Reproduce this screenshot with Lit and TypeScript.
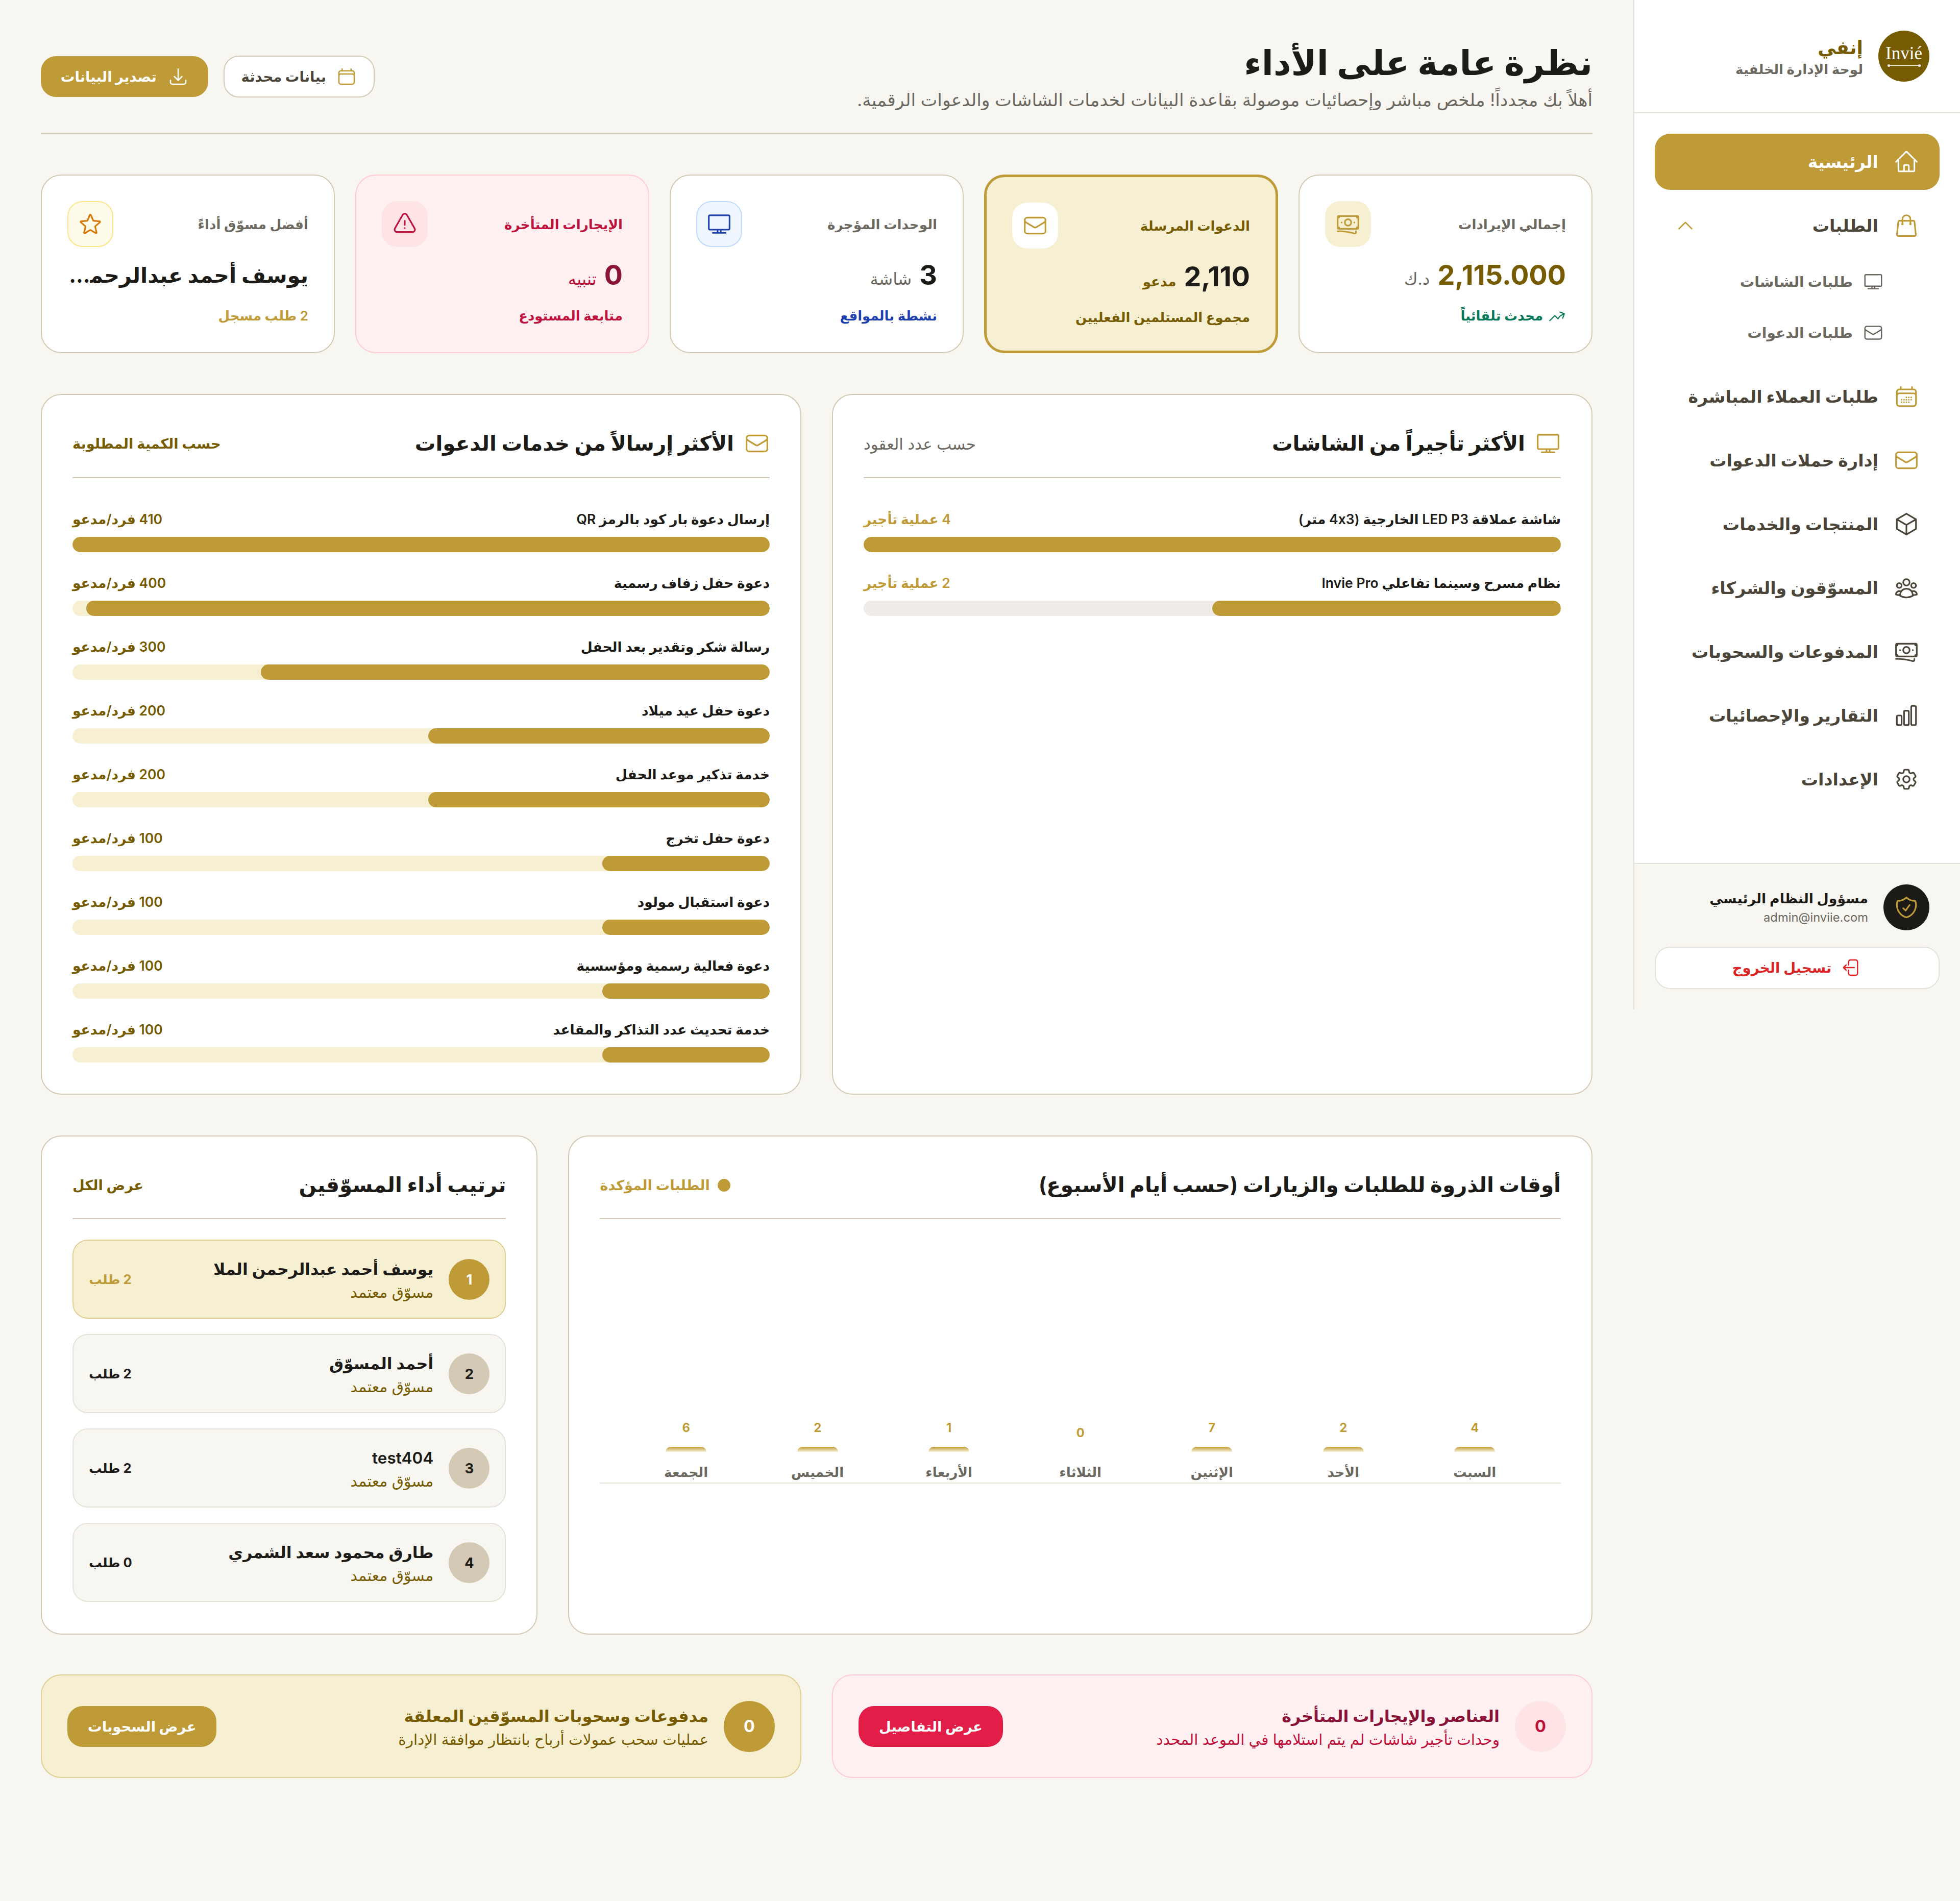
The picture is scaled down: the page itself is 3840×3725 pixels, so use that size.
import { LitElement, html, css, svg } from "lit";
import { customElement } from "lit/decorators.js";

const I: Record<string, string> = {
  home: "m2.25 12 8.954-8.955c.44-.439 1.152-.439 1.591 0L21.75 12M4.5 9.75v10.125c0 .621.504 1.125 1.125 1.125H9.75v-4.875c0-.621.504-1.125 1.125-1.125h2.25c.621 0 1.125.504 1.125 1.125V21h4.125c.621 0 1.125-.504 1.125-1.125V9.75M8.25 21h8.25",
  bag: "M15.75 10.5V6a3.75 3.75 0 1 0-7.5 0v4.5m11.356-1.993 1.263 12c.07.665-.45 1.243-1.119 1.243H4.25a1.125 1.125 0 0 1-1.12-1.243l1.264-12A1.125 1.125 0 0 1 5.513 7.5h12.974c.576 0 1.059.435 1.119 1.007ZM8.625 10.5a.375.375 0 1 1-.75 0 .375.375 0 0 1 .75 0Zm7.5 0a.375.375 0 1 1-.75 0 .375.375 0 0 1 .75 0Z",
  desktop: "M6 20.25h12m-7.5-3v3m3-3v3m-10.125-3h17.25c.621 0 1.125-.504 1.125-1.125V4.875c0-.621-.504-1.125-1.125-1.125H3.375c-.621 0-1.125.504-1.125 1.125v11.25c0 .621.504 1.125 1.125 1.125Z",
  mail: "M21.75 6.75v10.5a2.25 2.25 0 0 1-2.25 2.25h-15a2.25 2.25 0 0 1-2.25-2.25V6.75m19.5 0A2.25 2.25 0 0 0 19.5 4.5h-15a2.25 2.25 0 0 0-2.25 2.25m19.5 0v.243a2.25 2.25 0 0 1-1.07 1.916l-7.5 4.615a2.25 2.25 0 0 1-2.36 0L3.32 8.91a2.25 2.25 0 0 1-1.07-1.916V6.75",
  calDays: "M6.75 3v2.25M17.25 3v2.25M3 18.75V7.5a2.25 2.25 0 0 1 2.25-2.25h13.5A2.25 2.25 0 0 1 21 7.5v11.25m-18 0A2.25 2.25 0 0 0 5.25 21h13.5A2.25 2.25 0 0 0 21 18.75m-18 0v-7.5A2.25 2.25 0 0 1 5.25 9h13.5A2.25 2.25 0 0 1 21 11.25v7.5m-9-6h.008v.008H12v-.008ZM12 15h.008v.008H12V15Zm0 2.25h.008v.008H12v-.008ZM9.75 15h.008v.008H9.75V15Zm0 2.25h.008v.008H9.75v-.008ZM7.5 15h.008v.008H7.5V15Zm0 2.25h.008v.008H7.5v-.008Zm6.75-4.5h.008v.008h-.008v-.008Zm0 2.25h.008v.008h-.008V15Zm0 2.25h.008v.008h-.008v-.008Zm2.25-4.5h.008v.008H16.5v-.008Zm0 2.25h.008v.008H16.5V15Z",
  cal: "M6.75 3v2.25M17.25 3v2.25M3 18.75V7.5a2.25 2.25 0 0 1 2.25-2.25h13.5A2.25 2.25 0 0 1 21 7.5v11.25m-18 0A2.25 2.25 0 0 0 5.25 21h13.5A2.25 2.25 0 0 0 21 18.75m-18 0v-7.5A2.25 2.25 0 0 1 5.25 9h13.5A2.25 2.25 0 0 1 21 11.25v7.5",
  cube: "m21 7.5-9-5.25L3 7.5m18 0-9 5.25m9-5.25v9l-9 5.25M3 7.5l9 5.25M3 7.5v9l9 5.25m0-9v9",
  users: "M18 18.72a9.094 9.094 0 0 0 3.741-.479 3 3 0 0 0-4.682-2.72m.94 3.198.001.031c0 .225-.012.447-.037.666A11.944 11.944 0 0 1 12 21c-2.17 0-4.207-.576-5.963-1.584A6.062 6.062 0 0 1 6 18.719m12 0a5.971 5.971 0 0 0-.941-3.197m0 0A5.995 5.995 0 0 0 12 12.75a5.995 5.995 0 0 0-5.058 2.772m0 0a3 3 0 0 0-4.681 2.72 8.986 8.986 0 0 0 3.74.477m.94-3.197a5.971 5.971 0 0 0-.94 3.197M15 6.75a3 3 0 1 1-6 0 3 3 0 0 1 6 0Zm6 3a2.25 2.25 0 1 1-4.5 0 2.25 2.25 0 0 1 4.5 0Zm-13.5 0a2.25 2.25 0 1 1-4.5 0 2.25 2.25 0 0 1 4.5 0Z",
  cash: "M2.25 18.75a60.07 60.07 0 0 1 15.797 2.101c.727.198 1.453-.342 1.453-1.096V18.75M3.75 4.5v.75A.75.75 0 0 1 3 6h-.75m0 0v-.375c0-.621.504-1.125 1.125-1.125H20.25M2.25 6v9m18-10.5v.75c0 .414.336.75.75.75h.75m-1.5-1.5h.375c.621 0 1.125.504 1.125 1.125v9.75c0 .621-.504 1.125-1.125 1.125h-.375m1.5-1.5H21a.75.75 0 0 0-.75.75v.75m0 0H3.75m0 0h-.375a1.125 1.125 0 0 1-1.125-1.125V15m1.5 1.5v-.75A.75.75 0 0 0 3 15h-.75M15 10.5a3 3 0 1 1-6 0 3 3 0 0 1 6 0Zm3 0h.008v.008H18V10.5Zm-12 0h.008v.008H6V10.5Z",
  chart: "M3 13.125C3 12.504 3.504 12 4.125 12h2.25c.621 0 1.125.504 1.125 1.125v6.75C7.5 20.496 6.996 21 6.375 21h-2.25A1.125 1.125 0 0 1 3 19.875v-6.75ZM9.75 8.625c0-.621.504-1.125 1.125-1.125h2.25c.621 0 1.125.504 1.125 1.125v11.25c0 .621-.504 1.125-1.125 1.125h-2.25a1.125 1.125 0 0 1-1.125-1.125V8.625ZM16.5 4.125c0-.621.504-1.125 1.125-1.125h2.25C20.496 3 21 3.504 21 4.125v15.75c0 .621-.504 1.125-1.125 1.125h-2.25a1.125 1.125 0 0 1-1.125-1.125V4.125Z",
  cog: "M9.594 3.94c.09-.542.56-.94 1.11-.94h2.593c.55 0 1.02.398 1.11.94l.213 1.281c.063.374.313.686.645.87.074.04.147.083.22.127.325.196.72.257 1.075.124l1.217-.456a1.125 1.125 0 0 1 1.37.49l1.296 2.247a1.125 1.125 0 0 1-.26 1.431l-1.003.827c-.293.241-.438.613-.43.992a7.723 7.723 0 0 1 0 .255c-.008.378.137.75.43.991l1.004.827c.424.35.534.955.26 1.43l-1.298 2.247a1.125 1.125 0 0 1-1.369.491l-1.217-.456c-.355-.133-.75-.072-1.076.124a6.47 6.47 0 0 1-.22.128c-.331.183-.581.495-.644.869l-.213 1.281c-.09.543-.56.94-1.11.94h-2.594c-.55 0-1.019-.398-1.11-.94l-.213-1.281c-.062-.374-.312-.686-.644-.87a6.52 6.52 0 0 1-.22-.127c-.325-.196-.72-.257-1.076-.124l-1.217.456a1.125 1.125 0 0 1-1.369-.49l-1.297-2.247a1.125 1.125 0 0 1 .26-1.431l1.004-.827c.292-.24.437-.613.43-.991a6.932 6.932 0 0 1 0-.255c.007-.38-.138-.751-.43-.992l-1.004-.827a1.125 1.125 0 0 1-.26-1.43l1.297-2.247a1.125 1.125 0 0 1 1.37-.491l1.216.456c.356.133.751.072 1.076-.124.072-.044.146-.086.22-.128.332-.183.582-.495.644-.869l.214-1.28ZM15 12a3 3 0 1 1-6 0 3 3 0 0 1 6 0Z",
  shield: "M9 12.75 11.25 15 15 9.75m-3-7.036A11.959 11.959 0 0 1 3.598 6 11.99 11.99 0 0 0 3 9.749c0 5.592 3.824 10.29 9 11.623 5.176-1.332 9-6.03 9-11.622 0-1.31-.21-2.571-.598-3.751h-.152c-3.196 0-6.1-1.248-8.25-3.285Z",
  logout: "M15.75 9V5.25A2.25 2.25 0 0 0 13.5 3h-6a2.25 2.25 0 0 0-2.25 2.25v13.5A2.25 2.25 0 0 0 7.5 21h6a2.25 2.25 0 0 0 2.25-2.25V15m3 0 3-3m0 0-3-3m3 3H9",
  tray: "M3 16.5v2.25A2.25 2.25 0 0 0 5.25 21h13.5A2.25 2.25 0 0 0 21 18.75V16.5M16.5 12 12 16.5m0 0L7.5 12m4.5 4.5V3",
  warn: "M12 9v3.75m-9.303 3.376c-.866 1.5.217 3.374 1.948 3.374h14.71c1.73 0 2.813-1.874 1.948-3.374L13.949 3.378c-.866-1.5-3.032-1.5-3.898 0L2.697 16.126ZM12 15.75h.007v.008H12v-.008Z",
  star: "M11.48 3.499a.562.562 0 0 1 1.04 0l2.125 5.111a.563.563 0 0 0 .475.345l5.518.442c.499.04.701.663.321.988l-4.204 3.602a.563.563 0 0 0-.182.557l1.285 5.385a.562.562 0 0 1-.84.61l-4.725-2.885a.562.562 0 0 0-.586 0L6.982 20.54a.562.562 0 0 1-.84-.61l1.285-5.386a.562.562 0 0 0-.182-.557l-4.204-3.602a.562.562 0 0 1 .321-.988l5.518-.442a.563.563 0 0 0 .475-.345L11.48 3.5Z",
  trend: "M2.25 18 9 11.25l4.306 4.306a11.95 11.95 0 0 1 5.814-5.518l2.74-1.22m0 0-5.94-2.281m5.94 2.28-2.28 5.941",
  up: "m4.5 15.75 7.5-7.5 7.5 7.5",
};

const icon = (n: string, size: number, cls = "") => html`<svg class=${"ic " + cls} style="width:${size}px;height:${size}px" viewBox="0 0 24 24" fill="none" stroke="currentColor" stroke-width="1.5" stroke-linecap="round" stroke-linejoin="round">${svg`<path d=${I[n]}></path>`}</svg>`;

const invites: [string, number][] = [
  ["إرسال دعوة بار كود بالرمز QR", 410],
  ["دعوة حفل زفاف رسمية", 400],
  ["رسالة شكر وتقدير بعد الحفل", 300],
  ["دعوة حفل عيد ميلاد", 200],
  ["خدمة تذكير موعد الحفل", 200],
  ["دعوة حفل تخرج", 100],
  ["دعوة استقبال مولود", 100],
  ["دعوة فعالية رسمية ومؤسسية", 100],
  ["خدمة تحديث عدد التذاكر والمقاعد", 100],
];
const screens: [string, number][] = [
  ["شاشة عملاقة LED P3 الخارجية (4x3 متر)", 4],
  ["نظام مسرح وسينما تفاعلي Invie Pro", 2],
];
const sellers: [string, number][] = [
  ["يوسف أحمد عبدالرحمن الملا", 2],
  ["أحمد المسوّق", 2],
  ["test404", 2],
  ["طارق محمود سعد الشمري", 0],
];
const days: [string, number][] = [
  ["السبت", 4], ["الأحد", 2], ["الإثنين", 7], ["الثلاثاء", 0], ["الأربعاء", 1], ["الخميس", 2], ["الجمعة", 6],
];
const nav: [string, string][] = [
  ["calDays", "طلبات العملاء المباشرة"],
  ["mail", "إدارة حملات الدعوات"],
  ["cube", "المنتجات والخدمات"],
  ["users", "المسوّقون والشركاء"],
  ["cash", "المدفوعات والسحوبات"],
  ["chart", "التقارير والإحصائيات"],
  ["cog", "الإعدادات"],
];

@customElement("app-root")
export class AppRoot extends LitElement {
  static styles = css`
    :host { display: block; zoom: 2.5; font-family: Inter, "DejaVu Sans", sans-serif; background: #f8f6f1; color: #1c1b17; min-height: 1490px; }
    * { box-sizing: border-box; }
    .ic { flex: none; display: block; }
    .flip { transform: scaleX(-1); }
    .page { display: flex; direction: rtl; align-items: flex-start; }

    .side { width: 256px; height: 791px; flex: none; background: #fff; border-left: 1px solid #e5e2d8; display: flex; flex-direction: column; }
    .brand { display: flex; align-items: center; gap: 12px; padding: 24px; border-bottom: 1px solid #e5e2d8; }
    .logo { width: 40px; height: 40px; border-radius: 50%; background: #765b00; color: #fff; display: flex; flex-direction: column; align-items: center; justify-content: center; direction: ltr; font-family: "Liberation Serif", serif; font-size: 14px; line-height: 13px; }
    .logo i { display: flex; justify-content: space-between; align-items: center; width: 26px; height: 2px; margin-top: 2px; background: linear-gradient(#fff, #fff) center / 100% 0.5px no-repeat; }
    .logo i::before, .logo i::after { content: ""; width: 2px; height: 2px; border-radius: 50%; background: #fff; }
    .brand b { display: block; font-size: 14.5px; line-height: 20px; color: #765b00; }
    .brand span { display: block; font-size: 10.5px; line-height: 14px; color: #6b6860; font-weight: 600; }
    .nav { flex: 1; padding: 16px 16px 0; display: flex; flex-direction: column; gap: 6px; }
    .item { height: 44px; display: flex; align-items: center; gap: 12px; padding: 0 16px; border-radius: 12px; font-size: 13.3px; font-weight: 700; color: #4a4538; }
    .item .gold { color: #bf9b37; }
    .item.on { background: #bf9b37; color: #fff; }
    .item.on .gold { color: #fff; }
    .item .chev { margin-inline-start: auto; color: #bf9b37; }
    .subs { display: flex; flex-direction: column; margin: -4px 0 2px; }
    .sub { height: 40px; display: flex; align-items: center; gap: 8px; padding-right: 44px; font-size: 11.25px; font-weight: 600; color: #6b6860; }
    .foot { background: #f8f6f1; border-top: 1px solid #e5e2d8; padding: 16px; }
    .who { display: flex; align-items: center; gap: 12px; padding: 0 8px; margin-bottom: 13px; }
    .ava { width: 36px; height: 36px; border-radius: 50%; background: #1c1b17; color: #bf9b37; display: flex; align-items: center; justify-content: center; flex: none; }
    .who b { display: block; font-size: 10.7px; line-height: 16px; font-weight: 600; }
    .who span { display: block; font-size: 9.5px; line-height: 14px; color: #6b6860; direction: ltr; text-align: right; }
    .out { height: 33px; display: flex; align-items: center; justify-content: center; gap: 8px; background: #fff; border: 1px solid #e5e2d8; border-radius: 12px; color: #dc2626; font-size: 11px; font-weight: 600; }

    .main { flex: 1; min-width: 0; padding: 32px 32px 96px; }
    .top { display: flex; align-items: center; justify-content: space-between; padding-bottom: 16px; border-bottom: 1px solid #d4c9b5; margin-bottom: 32px; }
    h1 { margin: 0; font-size: 27px; line-height: 34px; font-weight: 700; }
    .top p { margin: 2px 0 0; font-size: 13.85px; line-height: 20px; color: #6b6860; }
    .acts { display: flex; align-items: center; gap: 12px; }
    .btn { display: flex; align-items: center; gap: 8px; border-radius: 12px; font-size: 11px; font-weight: 700; padding: 0 13px; }
    .b-out { height: 33px; background: #fff; border: 1px solid #d4c9b5; color: #4a4538; }
    .b-gold { height: 32px; background: #bf9b37; color: #fff; padding: 0 15.5px; gap: 9px; }

    .cards { display: grid; grid-template-columns: repeat(5, 1fr); gap: 16px; margin-bottom: 32px; }
    .card { background: #fff; border: 1px solid #d4c9b5; border-radius: 16px; padding: 20px; height: 140px; min-width: 0; }
    .c-head { display: flex; align-items: center; justify-content: space-between; margin-bottom: 6px; }
    .c-head span { font-size: 10.5px; font-weight: 600; color: #6b6860; }
    .tile { width: 36px; height: 36px; border-radius: 12px; display: flex; align-items: center; justify-content: center; flex: none; background: #f7efd2; color: #bf9b37; border: 1px solid transparent; }
    .val { display: flex; align-items: baseline; gap: 6px; height: 32px; line-height: 32px; font-size: 21.5px; font-weight: 700; }
    .val small { font-size: 13px; font-weight: 400; color: #6b6860; }
    .c-sub { margin-top: 8px; display: flex; align-items: center; gap: 4px; font-size: 10.4px; line-height: 16px; font-weight: 600; }
    .gold-t { color: #765b00; }
    .card.hi { background: #f7efd2; border: 2px solid #bf9b37; padding: 20px; }
    .card.hi .c-head span { color: #765b00; font-weight: 700; }
    .card.hi .val small { color: #765b00; font-weight: 700; font-size: 10.5px; }
    .card.hi .tile { background: #fff; }
    .card.hi .val { color: #1c1b17; }
    .card.late { background: #fff1f2; border-color: #fecdd3; }
    .card.late .c-head span { color: #be123c; }
    .card.late .tile { background: #ffe4e6; color: #be123c; }
    .card.late .val { color: #881337; }
    .card.late .val small { color: #be123c; }
    .card.blue .tile { background: #eff6ff; border-color: #bfdbfe; color: #1e40af; }
    .card.best .tile { background: #fffbeb; border-color: #fde68a; color: #d97706; }
    .name { font-size: 16.5px; line-height: 32px; font-weight: 700; white-space: nowrap; overflow: hidden; text-overflow: ellipsis; }

    .two { display: grid; grid-template-columns: repeat(2, 1fr); gap: 24px; margin-bottom: 32px; }
    .three { display: grid; grid-template-columns: repeat(3, 1fr); gap: 24px; margin-bottom: 31.5px; }
    .span2 { grid-column: span 2; }
    .panel { background: #fff; border: 1px solid #d4c9b5; border-radius: 16px; padding: 24px 24px 24.5px; min-width: 0; display: flex; flex-direction: column; }
    .p-head { display: flex; align-items: center; justify-content: space-between; height: 41px; padding-bottom: 12px; border-bottom: 1px solid #d4c9b5; margin-bottom: 24px; }
    .p-head h3 { margin: 0; font-size: 16.2px; line-height: 28px; font-weight: 700; display: flex; align-items: center; gap: 8px; }
    .p-head h3 .ic { color: #bf9b37; }
    .p-head > span { font-size: 10.9px; font-weight: 600; }
    .p-head > span.rg { font-size: 12.3px; font-weight: 400; color: #6b6860; }
    .bars { display: flex; flex-direction: column; gap: 16px; }
    .lab { display: flex; justify-content: space-between; font-size: 10.6px; line-height: 16px; font-weight: 600; margin-bottom: 6px; }
    .track { height: 12px; border-radius: 999px; background: #f7efd2; overflow: hidden; }
    .track.grey { background: #f0ede8; }
    .fill { height: 100%; background: #bf9b37; border-radius: 999px; }

    .rows { display: flex; flex-direction: column; gap: 12px; margin-top: -8px; }
    .row { height: 62px; display: flex; align-items: center; gap: 12px; padding: 0 12px; background: #f8f6f1; border: 1px solid #e5e2d8; border-radius: 12px; }
    .row.first { background: #f7efd2; border-color: #e0cf93; }
    .rank { width: 32px; height: 32px; border-radius: 50%; background: #d4c9b5; display: flex; align-items: center; justify-content: center; font-size: 11px; font-weight: 700; flex: none; }
    .row.first .rank { background: #bf9b37; color: #fff; }
    .who2 { flex: 1; min-width: 0; }
    .who2 b { display: block; font-size: 12.6px; line-height: 20px; font-weight: 600; }
    .who2 span { display: block; font-size: 12px; line-height: 16px; color: #765b00; }
    .cnt { font-size: 10.2px; font-weight: 700; }
    .row.first .cnt { color: #bf9b37; }

    .legend { display: flex; align-items: center; gap: 6px; color: #bf9b37; }
    .dot { width: 10px; height: 10px; border-radius: 50%; background: #bf9b37; }
    .plot { flex: none; height: 207px; margin-top: -24px; padding: 0 16px; display: grid; grid-template-columns: repeat(7, 1fr); align-items: end; border-bottom: 1px solid #e5e2d8; }
    .col { display: flex; flex-direction: column; align-items: center; }
    .n { font-size: 9.5px; line-height: 14px; font-weight: 700; color: #bf9b37; margin-bottom: 8px; }
    .bar { width: 32px; height: 4px; border-radius: 4px 4px 0 0; background: linear-gradient(#bf9b37, #f7efd2); }
    .d { font-size: 10.5px; line-height: 16px; font-weight: 600; color: #6b6860; margin-top: 8px; }

    .two.last { margin-bottom: 0; }
    .alert { display: flex; align-items: center; gap: 12px; height: 81px; padding: 0 20px; border-radius: 16px; border: 1px solid; }
    .alert .circ { width: 40px; height: 40px; border-radius: 50%; display: flex; align-items: center; justify-content: center; font-size: 13px; font-weight: 700; flex: none; }
    .alert .t { flex: 1; min-width: 0; }
    .alert b { display: block; font-size: 12.8px; line-height: 20px; font-weight: 700; }
    .alert span { display: block; font-size: 11.8px; line-height: 16px; }
    .alert .go { display: flex; align-items: center; height: 32px; padding: 0 16px; border-radius: 12px; color: #fff; font-size: 11px; font-weight: 700; }
    .a-red { background: #fff1f2; border-color: #fecdd3; color: #be123c; }
    .a-red .circ { background: #ffe4e6; }
    .a-red b { color: #881337; }
    .a-red .go { background: #e11d48; }
    .a-gold { background: #f7efd2; border-color: #e0cf93; color: #765b00; }
    .a-gold .circ { background: #bf9b37; color: #fff; }
    .a-gold .go { background: #bf9b37; }
  `;

  render() {
    const max = invites[0][1];
    const smax = screens[0][1];
    return html`<div class="page">
      <aside class="side">
        <div class="brand">
          <div class="logo">Invié<i></i></div>
          <div><b>إنفي</b><span>لوحة الإدارة الخلفية</span></div>
        </div>
        <nav class="nav">
          <div class="item on">${icon("home", 20, "gold")}الرئيسية</div>
          <div class="item">${icon("bag", 20, "gold")}الطلبات${icon("up", 16, "chev")}</div>
          <div class="subs">
            <div class="sub">${icon("desktop", 16)}طلبات الشاشات</div>
            <div class="sub">${icon("mail", 16)}طلبات الدعوات</div>
          </div>
          ${nav.map(([i, t], k) => html`<div class="item">${icon(i, 20, k < 2 ? "gold" : "")}${t}</div>`)}
        </nav>
        <div class="foot">
          <div class="who">
            <div class="ava">${icon("shield", 20)}</div>
            <div><b>مسؤول النظام الرئيسي</b><span>admin@inviie.com</span></div>
          </div>
          <div class="out">${icon("logout", 16, "flip")}تسجيل الخروج</div>
        </div>
      </aside>

      <main class="main">
        <header class="top">
          <div>
            <h1>نظرة عامة على الأداء</h1>
            <p>أهلاً بك مجدداً! ملخص مباشر وإحصائيات موصولة بقاعدة البيانات لخدمات الشاشات والدعوات الرقمية.</p>
          </div>
          <div class="acts">
            <div class="btn b-out">${svgGold("cal")}بيانات محدثة</div>
            <div class="btn b-gold">${icon("tray", 16)}تصدير البيانات</div>
          </div>
        </header>

        <section class="cards">
          <div class="card">
            <div class="c-head"><span>إجمالي الإيرادات</span><div class="tile">${icon("cash", 20)}</div></div>
            <div class="val gold-t">2,115.000 <small class="gold-t">د.ك</small></div>
            <div class="c-sub" style="color:#047857">${icon("trend", 14)}محدث تلقائياً</div>
          </div>
          <div class="card hi">
            <div class="c-head"><span>الدعوات المرسلة</span><div class="tile">${icon("mail", 20)}</div></div>
            <div class="val">2,110 <small>مدعو</small></div>
            <div class="c-sub gold-t">مجموع المستلمين الفعليين</div>
          </div>
          <div class="card blue">
            <div class="c-head"><span>الوحدات المؤجرة</span><div class="tile">${icon("desktop", 20)}</div></div>
            <div class="val">3 <small>شاشة</small></div>
            <div class="c-sub" style="color:#1e40af">نشطة بالمواقع</div>
          </div>
          <div class="card late">
            <div class="c-head"><span>الإيجارات المتأخرة</span><div class="tile">${icon("warn", 20)}</div></div>
            <div class="val">0 <small>تنبيه</small></div>
            <div class="c-sub" style="color:#be123c">متابعة المستودع</div>
          </div>
          <div class="card best">
            <div class="c-head"><span>أفضل مسوّق أداءً</span><div class="tile">${icon("star", 20)}</div></div>
            <div class="name">يوسف أحمد عبدالرحمن الملا</div>
            <div class="c-sub" style="color:#bf9b37">2 طلب مسجل</div>
          </div>
        </section>

        <section class="two">
          <div class="panel">
            <div class="p-head"><h3>${icon("desktop", 20)}الأكثر تأجيراً من الشاشات</h3><span class="rg">حسب عدد العقود</span></div>
            <div class="bars">
              ${screens.map(([t, v]) => html`<div>
                <div class="lab"><span>${t}</span><span style="color:#bf9b37">${v} عملية تأجير</span></div>
                <div class="track grey"><div class="fill" style="width:${Math.round((v / smax) * 100)}%"></div></div>
              </div>`)}
            </div>
          </div>
          <div class="panel">
            <div class="p-head"><h3>${icon("mail", 20)}الأكثر إرسالاً من خدمات الدعوات</h3><span class="gold-t">حسب الكمية المطلوبة</span></div>
            <div class="bars">
              ${invites.map(([t, v]) => html`<div>
                <div class="lab"><span>${t}</span><span class="gold-t">${v} فرد/مدعو</span></div>
                <div class="track"><div class="fill" style="width:${Math.round((v / max) * 100)}%"></div></div>
              </div>`)}
            </div>
          </div>
        </section>

        <section class="three">
          <div class="panel span2">
            <div class="p-head"><h3>أوقات الذروة للطلبات والزيارات (حسب أيام الأسبوع)</h3><span class="legend"><i class="dot"></i>الطلبات المؤكدة</span></div>
            <div class="plot">
              ${days.map(([t, v]) => html`<div class="col"><div class="n">${v}</div>${v ? html`<div class="bar"></div>` : ""}<div class="d">${t}</div></div>`)}
            </div>
          </div>
          <div class="panel">
            <div class="p-head"><h3>ترتيب أداء المسوّقين</h3><span class="gold-t">عرض الكل</span></div>
            <div class="rows">
              ${sellers.map(([t, v], i) => html`<div class=${i === 0 ? "row first" : "row"}>
                <div class="rank">${i + 1}</div>
                <div class="who2"><b>${t}</b><span>مسوّق معتمد</span></div>
                <div class="cnt">${v} طلب</div>
              </div>`)}
            </div>
          </div>
        </section>

        <section class="two last">
          <div class="alert a-red">
            <div class="circ">0</div>
            <div class="t"><b>العناصر والإيجارات المتأخرة</b><span>وحدات تأجير شاشات لم يتم استلامها في الموعد المحدد</span></div>
            <div class="go">عرض التفاصيل</div>
          </div>
          <div class="alert a-gold">
            <div class="circ">0</div>
            <div class="t"><b>مدفوعات وسحوبات المسوّقين المعلقة</b><span>عمليات سحب عمولات أرباح بانتظار موافقة الإدارة</span></div>
            <div class="go">عرض السحوبات</div>
          </div>
        </section>
      </main>
    </div>`;
  }
}

function svgGold(n: string) {
  return html`<span style="color:#bf9b37;display:block">${icon(n, 16)}</span>`;
}
